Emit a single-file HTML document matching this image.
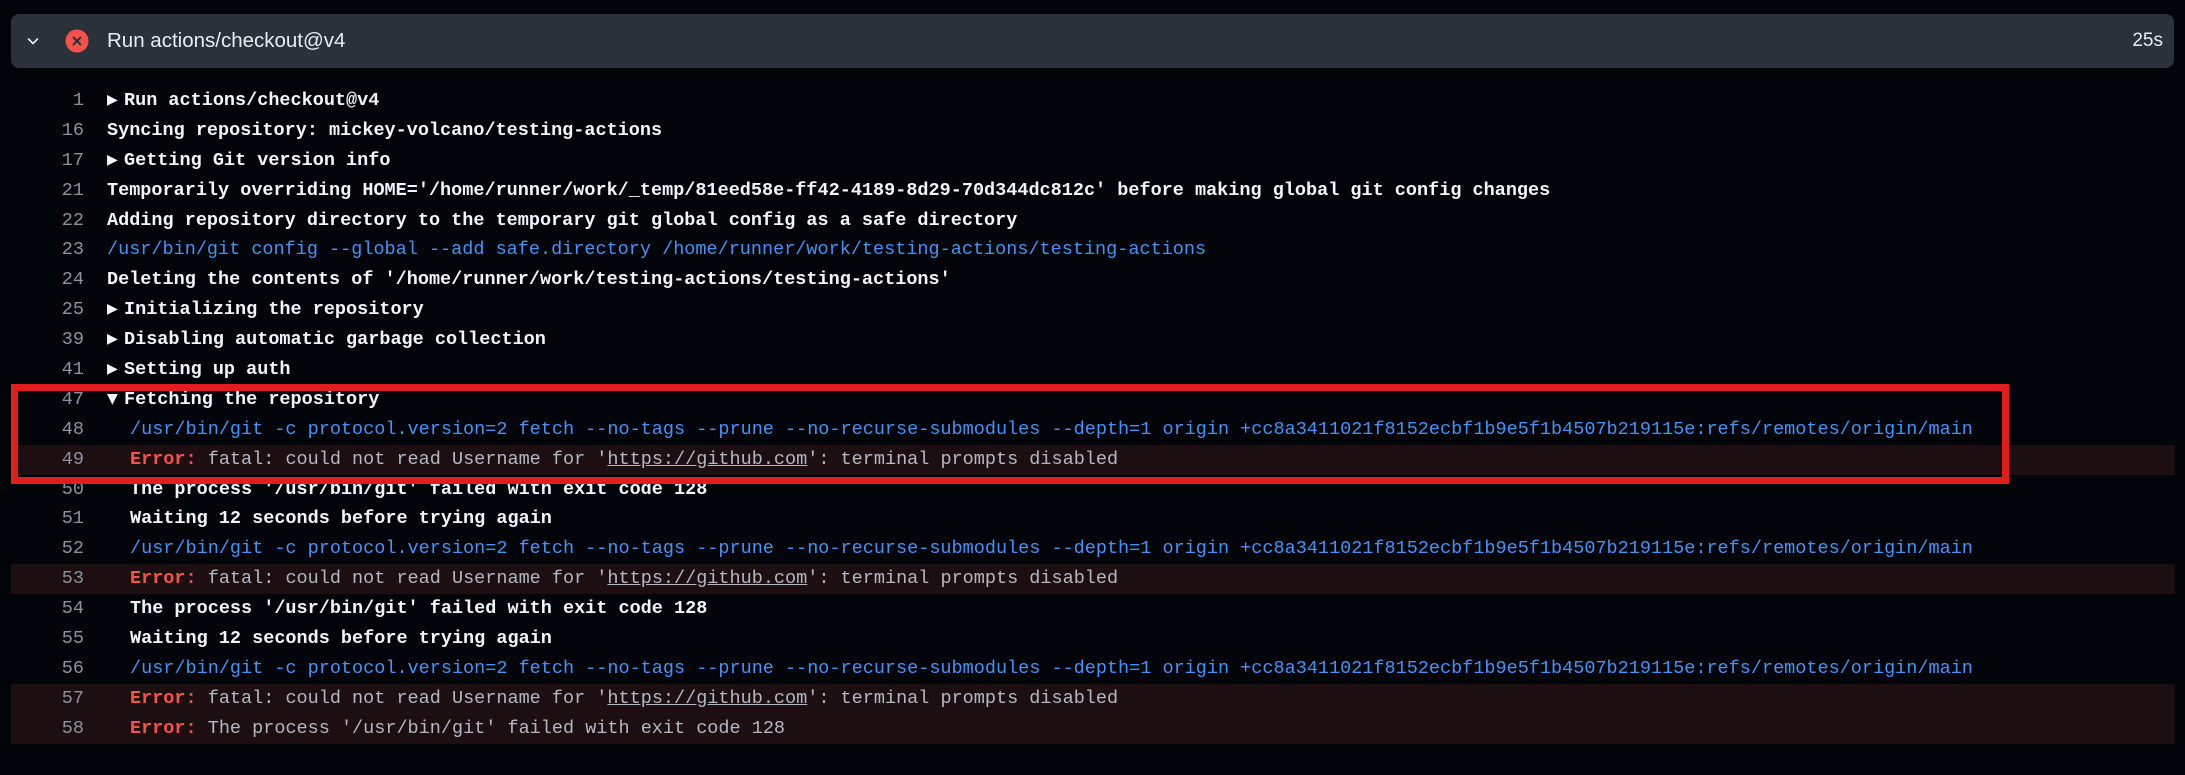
<!DOCTYPE html>
<html><head><meta charset="utf-8"><style>
html,body{margin:0;padding:0;background:#010409;width:2185px;height:775px;overflow:hidden}
.hdr{position:absolute;left:11px;top:14px;width:2163px;height:54px;background:#2b313b;border-radius:8px}
.hdr .t{position:absolute;left:96px;top:15px;font:20.5px "Liberation Sans",sans-serif;color:#e6edf3}
.hdr .d{position:absolute;right:11px;top:16px;font:19px "Liberation Sans",sans-serif;color:#e6edf3}
.log{position:absolute;left:0;top:86px;width:2185px;font-family:"Liberation Mono",monospace;font-size:18.5px}
.r{position:relative;height:29.9px;line-height:29.9px;white-space:pre}
.r.e{background:#1c0e11;margin-left:11px;width:2164px}
.n{position:absolute;left:0;width:84px;text-align:right;color:#8b949e}
.r.e .n{left:-11px}
.c{position:absolute;left:107px;color:#f0f6fc;font-weight:bold}
.r.e .c{left:96px}
.c.i{left:130px}
.r.e .c.i{left:119px}
.b{color:#4493f8;font-weight:normal}
.g{color:#b1bac4;font-weight:normal}
.er{color:#f85149;font-weight:bold}
.tri{display:inline-block;width:17px;font-size:14px;vertical-align:top;font-family:"DejaVu Sans",sans-serif}
u{text-decoration:underline}
.box{position:absolute;left:11px;top:384px;width:1984px;height:86px;border:7px solid #e11d1d}
</style></head><body>
<div class="hdr">
<svg style="position:absolute;left:14px;top:19px" width="16" height="16" viewBox="0 0 16 16"><path d="M3.5 6l4.5 4.5 4.5-4.5" stroke="#e6edf3" stroke-width="1.6" fill="none" stroke-linecap="round" stroke-linejoin="round"/></svg>
<svg style="position:absolute;left:54px;top:15px" width="24" height="24" viewBox="0 0 24 24"><circle cx="12" cy="12" r="11.5" fill="#f85149"/><path d="M8.5 8.5l7 7M15.5 8.5l-7 7" stroke="#2b313b" stroke-width="2" stroke-linecap="round"/></svg>
<div class="t">Run actions/checkout@v4</div>
<div class="d">25s</div>
</div>
<div class="log">
<div class="r"><span class="n">1</span><span class="c"><span class="tri">▶</span>Run actions/checkout@v4</span></div>
<div class="r"><span class="n">16</span><span class="c">Syncing repository: mickey-volcano/testing-actions</span></div>
<div class="r"><span class="n">17</span><span class="c"><span class="tri">▶</span>Getting Git version info</span></div>
<div class="r"><span class="n">21</span><span class="c">Temporarily overriding HOME='/home/runner/work/_temp/81eed58e-ff42-4189-8d29-70d344dc812c' before making global git config changes</span></div>
<div class="r"><span class="n">22</span><span class="c">Adding repository directory to the temporary git global config as a safe directory</span></div>
<div class="r"><span class="n">23</span><span class="c b">/usr/bin/git config --global --add safe.directory /home/runner/work/testing-actions/testing-actions</span></div>
<div class="r"><span class="n">24</span><span class="c">Deleting the contents of '/home/runner/work/testing-actions/testing-actions'</span></div>
<div class="r"><span class="n">25</span><span class="c"><span class="tri">▶</span>Initializing the repository</span></div>
<div class="r"><span class="n">39</span><span class="c"><span class="tri">▶</span>Disabling automatic garbage collection</span></div>
<div class="r"><span class="n">41</span><span class="c"><span class="tri">▶</span>Setting up auth</span></div>
<div class="r"><span class="n">47</span><span class="c"><span class="tri">▼</span>Fetching the repository</span></div>
<div class="r"><span class="n">48</span><span class="c i b">/usr/bin/git -c protocol.version=2 fetch --no-tags --prune --no-recurse-submodules --depth=1 origin +cc8a3411021f8152ecbf1b9e5f1b4507b219115e:refs/remotes/origin/main</span></div>
<div class="r e"><span class="n">49</span><span class="c i g"><span class="er">Error:</span> fatal: could not read Username for '<u>https://github.com</u>': terminal prompts disabled</span></div>
<div class="r"><span class="n">50</span><span class="c i">The process '/usr/bin/git' failed with exit code 128</span></div>
<div class="r"><span class="n">51</span><span class="c i">Waiting 12 seconds before trying again</span></div>
<div class="r"><span class="n">52</span><span class="c i b">/usr/bin/git -c protocol.version=2 fetch --no-tags --prune --no-recurse-submodules --depth=1 origin +cc8a3411021f8152ecbf1b9e5f1b4507b219115e:refs/remotes/origin/main</span></div>
<div class="r e"><span class="n">53</span><span class="c i g"><span class="er">Error:</span> fatal: could not read Username for '<u>https://github.com</u>': terminal prompts disabled</span></div>
<div class="r"><span class="n">54</span><span class="c i">The process '/usr/bin/git' failed with exit code 128</span></div>
<div class="r"><span class="n">55</span><span class="c i">Waiting 12 seconds before trying again</span></div>
<div class="r"><span class="n">56</span><span class="c i b">/usr/bin/git -c protocol.version=2 fetch --no-tags --prune --no-recurse-submodules --depth=1 origin +cc8a3411021f8152ecbf1b9e5f1b4507b219115e:refs/remotes/origin/main</span></div>
<div class="r e"><span class="n">57</span><span class="c i g"><span class="er">Error:</span> fatal: could not read Username for '<u>https://github.com</u>': terminal prompts disabled</span></div>
<div class="r e"><span class="n">58</span><span class="c i g"><span class="er">Error:</span> The process '/usr/bin/git' failed with exit code 128</span></div>
</div>
<div class="box"></div>
</body></html>
